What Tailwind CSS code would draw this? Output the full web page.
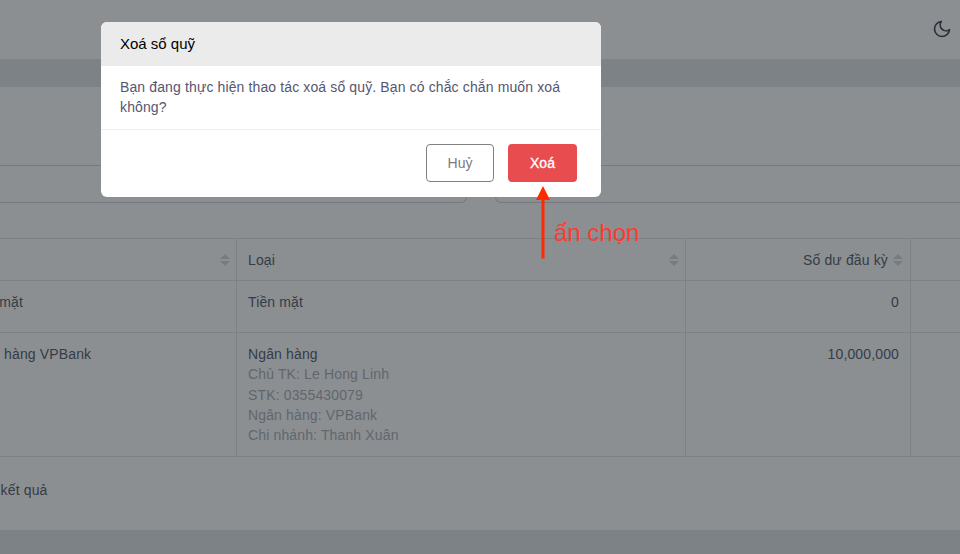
<!doctype html>
<html lang="vi"><head><meta charset="utf-8"><script src="https://cdn.jsdelivr.net/npm/@tailwindcss/browser@4"></script></head>
<body class="h-[554px] w-[960px] overflow-hidden bg-[#e0e4e6] font-['Liberation_Sans',sans-serif] text-sm tracking-[0.14px] text-[#505865]">
<div class="relative h-[554px] w-[960px] overflow-hidden">
  <header class="flex h-[59px] items-start justify-end bg-white pt-[19px] pr-[8px]">
    <svg class="size-5 text-[#374151]" viewBox="0 0 24 24" fill="none" stroke="currentColor" stroke-width="2" stroke-linecap="round" stroke-linejoin="round"><path d="M21 12.79A9 9 0 1 1 11.21 3 7 7 0 0 0 21 12.79z"/></svg>
  </header>
  <main class="mt-[28px] flex h-[443px] flex-col bg-white">
    <div class="h-[79px] border-b border-[#d1d5db]"></div>
    <div class="flex h-[37px] gap-[28px]">
      <div class="ml-[-20px] h-[37px] w-[487px] rounded-b-md border-x border-b border-[#d1d5db]"></div>
      <div class="h-[37px] flex-1 rounded-bl-md border-b border-l border-[#d1d5db]"></div>
    </div>
    <div class="ml-[-20px] mt-[35px] grid w-[1020px] grid-cols-[257px_449px_225px_89px] border-t border-[#dfe2e6]">
      <div class="flex h-[42px] items-center border-r border-b border-[#dfe2e6] pr-[6px]"><span class="ml-auto flex flex-col gap-[2px]"><svg class="h-[5px] w-[10px] text-[#d4d7db]" viewBox="0 0 10 5"><path fill="currentColor" d="M5 0 10 5H0z"/></svg><svg class="h-[5px] w-[10px] text-[#d4d7db]" viewBox="0 0 10 5"><path fill="currentColor" d="M0 0h10L5 5z"/></svg></span></div>
      <div class="flex h-[42px] items-center border-r border-b border-[#dfe2e6] pr-[6px] pl-[11px]"><span>Loại</span><span class="ml-auto flex flex-col gap-[2px]"><svg class="h-[5px] w-[10px] text-[#d4d7db]" viewBox="0 0 10 5"><path fill="currentColor" d="M5 0 10 5H0z"/></svg><svg class="h-[5px] w-[10px] text-[#d4d7db]" viewBox="0 0 10 5"><path fill="currentColor" d="M0 0h10L5 5z"/></svg></span></div>
      <div class="flex h-[42px] items-center justify-end gap-[5px] border-r border-b border-[#dfe2e6] pr-[7px]"><span>Số dư đầu kỳ</span><span class="flex flex-col gap-[2px]"><svg class="h-[5px] w-[10px] text-[#d4d7db]" viewBox="0 0 10 5"><path fill="currentColor" d="M5 0 10 5H0z"/></svg><svg class="h-[5px] w-[10px] text-[#d4d7db]" viewBox="0 0 10 5"><path fill="currentColor" d="M0 0h10L5 5z"/></svg></span></div>
      <div class="h-[42px] border-b border-[#dfe2e6]"></div>

      <div class="h-[52px] overflow-hidden border-r border-b border-[#dfe2e6] pt-[11px] pl-[20px] whitespace-nowrap leading-5"><span class="ml-[-32px]">Tiền mặt</span></div>
      <div class="h-[52px] border-r border-b border-[#dfe2e6] pt-[11px] pl-[11px] leading-5">Tiền mặt</div>
      <div class="h-[52px] border-r border-b border-[#dfe2e6] pt-[11px] pr-[11px] text-right leading-5">0</div>
      <div class="h-[52px] border-b border-[#dfe2e6]"></div>

      <div class="h-[124px] overflow-hidden border-r border-b border-[#dfe2e6] pt-[11px] whitespace-nowrap leading-5"><span class="ml-[-14px]">Ngân hàng VPBank</span></div>
      <div class="h-[124px] border-r border-b border-[#dfe2e6] pt-[11px] pl-[11px] leading-[20.3px]">
        <div>Ngân hàng</div>
        <div class="text-[#a8adb5]"><div>Chủ TK: Le Hong Linh</div><div>STK: 0355430079</div><div>Ngân hàng: VPBank</div><div>Chi nhánh: Thanh Xuân</div></div>
      </div>
      <div class="h-[124px] border-r border-b border-[#dfe2e6] pt-[11px] pr-[11px] text-right leading-5">10,000,000</div>
      <div class="h-[124px] border-b border-[#dfe2e6]"></div>
    </div>
    <div class="mt-[23px] ml-[-64px] leading-5">Hiển thị 2 kết quả</div>
  </main>
  <div class="absolute inset-0 bg-[#192025]/50"></div>
  <div role="dialog" class="absolute top-[22px] left-[101px] flex w-[500px] flex-col overflow-hidden rounded-md bg-white">
    <div class="flex h-[44px] items-center bg-[#ebebeb] px-[19px] text-[15px] tracking-normal text-black">Xoá sổ quỹ</div>
    <div class="h-[64px] border-b border-[#f0f0f0] px-[19px] pt-[11px] leading-5 tracking-[0.125px] text-[#565670]">Bạn đang thực hiện thao tác xoá sổ quỹ. Bạn có chắc chắn muốn xoá không?</div>
    <div class="flex h-[67px] items-start justify-end gap-[14px] pt-[14px] pr-[24px]">
      <button class="h-[38px] w-[68px] rounded border border-[#808080] bg-white tracking-normal text-[#7a7a85]">Huỷ</button>
      <button class="h-[38px] w-[69px] rounded bg-[#e94c4f] tracking-normal text-white [-webkit-text-stroke:0.3px_white]">Xoá</button>
    </div>
  </div>
  <svg class="absolute top-[186px] left-[535px]" width="16" height="73" viewBox="0 0 16 73"><path d="M8 13V72.500" stroke="#ff2a00" stroke-width="3" fill="none"/><path d="M8 0 15 14H1z" fill="#ff2a00"/></svg>
  <div class="absolute top-[219px] left-[554px] text-[24px] leading-7 tracking-normal text-[#ff3a30]">ấn chọn</div>
</div>
</body></html>
